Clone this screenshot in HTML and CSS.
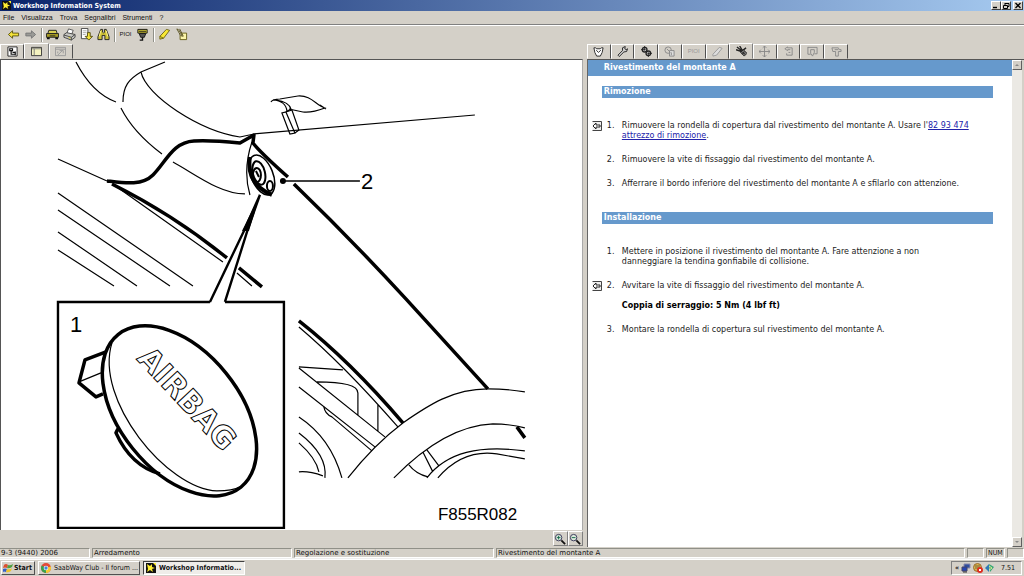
FILE: index.html
```html
<!DOCTYPE html>
<html lang="it">
<head>
<meta charset="utf-8">
<title>Workshop Information System</title>
<link rel="stylesheet" href="styles.css">
</head>
<body>
<header class="titlebar">
  <svg class="app-icon" viewBox="0 0 10 10"><rect width="10" height="10" fill="#111"/><path d="M1 1l3 2 2-2 0 3 3 1-3 1 1 3-3-2-3 2 1-3z" fill="#ffee32"/><path d="M7 0h3v3z" fill="#ffee32"/></svg>
  <h1>Workshop Information System</h1>
  <div class="window-buttons">
    <button aria-label="Riduci"><svg viewBox="0 0 8 7"><path d="M1 5.5h4" stroke="#000" stroke-width="1.4"/></svg></button>
    <button aria-label="Ripristina"><svg viewBox="0 0 8 7"><path d="M3 1.5h4v3h-1M3 1v2M1.500 3.500h4v3h-4z" fill="none" stroke="#000"/></svg></button>
    <button class="close" aria-label="Chiudi"><svg viewBox="0 0 8 7"><path d="M1.500 1l5 5M6.500 1l-5 5" stroke="#000" stroke-width="1.3"/></svg></button>
  </div>
</header>
<nav class="menubar">
  <button>File</button><button>Visualizza</button><button>Trova</button><button>Segnalibri</button><button>Strumenti</button><button>?</button>
</nav>
<div class="toolbar">
  <button aria-label="Indietro"><svg viewBox="0 0 14 14"><path d="M1.500 7L6 3v2.500h6.500v3H6V11z" fill="#f4e33a" stroke="#5b5410"/></svg></button>
  <button aria-label="Avanti"><svg viewBox="0 0 14 14"><path d="M12.500 7L8 3v2.500H2v3h6V11z" fill="#9a9a96" stroke="#777"/></svg></button>
  <span class="separator"></span>
  <button aria-label="Veicolo"><svg viewBox="0 0 14 14"><path d="M3 2.500h8l1 3.500H2z" fill="#d8cf52" stroke="#222"/><path d="M.5 6h13v4H.5z" fill="#a89d24" stroke="#222"/><path d="M1 10h3v2H1zM10 10h3v2h-3z" fill="#111"/><path d="M4 8.500h6" stroke="#222"/></svg></button>
  <button aria-label="Stampa"><svg viewBox="0 0 14 14"><path d="M4 6l2-5 5 1.500-1.500 4" fill="#fff" stroke="#555"/><path d="M1 7l3-2 9 2v3l-4 3-8-3z" fill="#c8c8c3" stroke="#444"/><path d="M1 7.500l8 2.500 4-3M9 10v3" fill="none" stroke="#444"/><path d="M6 10l2 1" stroke="#d8c800"/></svg></button>
  <button aria-label="Inserisci segnalibro"><svg viewBox="0 0 14 14"><path d="M1.500.5h7v11h-7z" fill="#fff" stroke="#444"/><path d="M3 3h4M3 5h4M3 7h3" stroke="#aaa"/><path d="M8 5h3v4h2.500L9.500 13 5.500 9H8z" fill="#f4e33a" stroke="#544d10"/></svg></button>
  <button aria-label="Cerca"><svg viewBox="0 0 14 14"><path d="M4 1.500h2v3l1 1 1-1v-3h2l3 8v3H8.500V8h-3v4.500H1v-3z" fill="#cfc33a" stroke="#222"/><path d="M4 3l-1.500 6M10 3l1.500 6" stroke="#fff79a"/></svg></button>
  <span class="separator"></span>
  <button class="text-button">PIOI</button>
  <button aria-label="Diagnosi"><svg viewBox="0 0 14 14"><path d="M2 1.500h10v4H2z" fill="#e2d539" stroke="#111"/><path d="M3 3.500h8" stroke="#111"/><path d="M3.500 6h7l-1.500 4H5z" fill="#555" stroke="#111"/><path d="M7 10v3H4" fill="none" stroke="#111" stroke-width="1.500"/></svg></button>
  <span class="separator"></span>
  <button aria-label="Evidenzia"><svg viewBox="0 0 14 14"><path d="M2 9l7-7.500 3.500 1L6 11l-4 1z" fill="#f8e832" stroke="#6a6116"/><path d="M2 9l4 2" stroke="#6a6116"/></svg></button>
  <button aria-label="Note"><svg viewBox="0 0 14 14"><path d="M5.500 5.500h7v7h-7z" fill="#fbf5a9" stroke="#665e16"/><path d="M2 1l2 1 4 7-2-1zM5 1l4 8" fill="#fff" stroke="#554e1b"/></svg></button>
</div>
<main class="workspace">
  <section class="column">
    <div class="tabs left-tabs">
      <button class="tab" aria-label="Struttura"><svg viewBox="0 0 12 12"><path d="M1 1h10v10H1z" fill="#fff" stroke="#222"/><path d="M3 3h3v2H3zM6 7h3M4.500 5v4H9M9 6v4" fill="none" stroke="#111" stroke-width="1.300"/></svg></button>
      <button class="tab active" aria-label="Figura"><svg viewBox="0 0 12 12"><path d="M.5 1.500h11v9H.5z" fill="#f5f3bf" stroke="#333"/><path d="M1 3h10M3.500 3v7" stroke="#777"/></svg></button>
      <button class="tab" disabled aria-label="Schema"><svg viewBox="0 0 12 12"><path d="M.5 1.500h11v9H.5zM1 3.500h10M3 10l5-5M5 5h4v3M3 6v2" fill="none" stroke="#999"/></svg></button>
    </div>
    <div class="picture-pane">
      <svg class="drawing" viewBox="1 60 581 470" preserveAspectRatio="xMinYMin meet" role="img" aria-label="Rivestimento del montante A">
        <g class="thin">
          <path d="M76 62Q92 93 116 102M165 62L141 72C129 79 123 86 123 102M141 72C146 96 200 131 240 137L254 134 475 115"/>
          <path d="M121 108C130 126 146 142 162 154M173 162C195 174 220 194 245 194"/>
          <path d="M58 159L107 181M58 193L193 286M58 210L170 286M58 232L137 286M58 250L114 286"/>
          <path d="M117 187L223 262M237 273L252 286M252 142C246 160 245 178 250 195"/>
          <path d="M271 102Q273 99 280 99L298 96C311 95 316 105 325 108Q312 113 303 112L289 109M273 100Q286 101 287 111M276 100Q289 102 291 109L286 112M320 105L326 109"/>
          <path d="M282 113L290 134 295 133 286 112zM286 112L292 110 299 130 295 133"/>
          <path d="M299 327Q344 365 398 427M299 367L343 370M299 368L385 437M299 387L375 447M317 382Q358 382 358 393V415M378 404V431"/>
          <path d="M324 407Q325 414 332 417L372 451M299 417Q331 438 342 478M299 433Q328 455 325 478M299 443Q316 458 319 472M299 472Q309 471 323 476"/>
          <path d="M348 478C366 455 383 438 403 423C429 405 453 389 488 389Q508 389 525 392M394 478Q445 426 493 424Q510 424 525 428"/>
          <path d="M427 478C447 452 480 445 525 451M438 478Q463 449 497 454L525 459M409 465Q416 474 428 477M423 452L433 472M427 450L439 466"/>
          <path d="M112 343C94 400 167 489 217 491Q233 491 240 487M79 382L101 373"/>
        </g>
        <g class="thick">
          <path d="M107 181C124 183 142 186 153 175C166 162 173 142 194 141Q210 140 240 143L254 135 253 143Q261 153 288 177M294 184Q351 239 406 299L488 389"/>
          <path d="M112 184Q174 215 227 258M239 268L262 287M299 321Q350 361 403 423M517 427L525 438"/>
          <ellipse cx="179.500" cy="411" rx="98" ry="60" transform="rotate(51.200 179.500 411)"/>
          <path d="M106 352L85 360 79 383 96 397 103 394M118 429L116 433Q131 466 160 474"/>
        </g>
        <path class="outline" d="M210 302H58V528H284V302H225M260 195L244 231 210 302M260 195L248 229 225 302"/>
        <path d="M260 195L249 231 242 231z"/>
        <g fill="none" stroke="#000">
          <ellipse cx="262" cy="175" rx="11" ry="21" stroke-width="1.500" transform="rotate(-22 262 175)"/>
          <path d="M250 157Q246 184 272 195" stroke-width="4"/>
          <ellipse cx="259" cy="173" rx="6" ry="12" stroke-width="2" transform="rotate(-14 259 173)"/>
          <ellipse cx="257" cy="175" rx="4" ry="7" stroke-width="2"/>
          <path d="M256 171L259 177" stroke-width="2"/>
          <ellipse cx="270" cy="186" rx="3" ry="5" stroke-width="2"/>
        </g>
        <circle cx="283" cy="181" r="3"/>
        <path class="lead" d="M283 181H360"/>
        <text class="callout" x="361" y="189">2</text>
        <text class="callout" x="70" y="332">1</text>
        <text class="figure-code" x="438" y="520">F855R082</text>
        <text class="embossed" x="0" y="0" transform="translate(136 359) rotate(47)">AIRBAG</text>
      </svg>
    </div>
    <div class="zoom-bar">
      <button aria-label="Ingrandisci"><svg viewBox="0 0 13 13"><circle cx="5" cy="5" r="3.500" fill="#dce9dc" stroke="#335"/><path d="M3 5h4M5 3v4" stroke="#164"/><path d="M8 8l4 4" stroke="#111" stroke-width="2"/></svg></button>
      <button aria-label="Riduci"><svg viewBox="0 0 13 13"><circle cx="5" cy="5" r="3.500" fill="#dce9dc" stroke="#335"/><path d="M3 5h4" stroke="#164"/><path d="M8 8l4 4" stroke="#111" stroke-width="2"/></svg></button>
    </div>
  </section>
  <section class="column">
    <div class="tabs right-tabs">
      <button class="tab" aria-label="Tempi"><svg viewBox="0 0 12 12"><path d="M1 2l2 0 1 1h4l1-1h2l-1 5-2 4H4L2 7z" fill="#fff" stroke="#222"/><path d="M3.500 4.500L6 7l2.500-2.500" fill="none" stroke="#222"/></svg></button>
      <button class="tab" aria-label="Attrezzi"><svg viewBox="0 0 12 12"><path d="M1 10l5-5V2l3-1.500-.5 2.500 1.500 1 1.500-1-1 3-3 .5-5 5z" fill="#ccc" stroke="#222"/></svg></button>
      <button class="tab" aria-label="Ricambi"><svg viewBox="0 0 12 12"><circle cx="4" cy="4" r="2.500" fill="#ddd" stroke="#222" stroke-width="1.500"/><circle cx="8" cy="8" r="2.500" fill="#ddd" stroke="#222" stroke-width="1.500"/><path d="M4 0v5M0 4h5M8 7v5M7 8h5" stroke="#222"/></svg></button>
      <button class="tab" disabled aria-label="Componenti"><svg viewBox="0 0 12 12"><circle cx="4.500" cy="4.500" r="3.500" fill="none" stroke="#888"/><path d="M3 3l4 4M6 5h5v6H6zM8 7v3" fill="#ddd" stroke="#888"/></svg></button>
      <button class="tab text-tab" disabled>PIOI</button>
      <button class="tab" disabled aria-label="Evidenzia"><svg viewBox="0 0 12 12"><path d="M1 9l7-7.500 3 1L5 10l-4 1z" fill="#ddd" stroke="#999"/></svg></button>
      <button class="tab active" aria-label="Rimozione e installazione"><svg viewBox="0 0 12 12"><path d="M1 1l5 4M4 0l3 5M0 4l6 2M7 5l4-3" fill="none" stroke="#222" stroke-width="1.500"/><path d="M5 7l3-3 4 4-3 3z" fill="#777" stroke="#222"/><path d="M7 7l3 2M9 6L7 9" stroke="#222"/></svg></button>
      <button class="tab" disabled aria-label="Posizione"><svg viewBox="0 0 12 12"><path d="M6 0v12M0 6h12M4 2l2-2 2 2M4 10l2 2 2-2M2 4L0 6l2 2M10 4l2 2-2 2" fill="none" stroke="#888"/></svg></button>
      <button class="tab" disabled aria-label="Procedura"><svg viewBox="0 0 12 12"><path d="M2 3l3-2v1h5v8H4V8M2 3l3 2V4h3M6 7h2" fill="none" stroke="#888"/></svg></button>
      <button class="tab" disabled aria-label="Bollettini"><svg viewBox="0 0 12 12"><path d="M1 1.500h10v7H8M1 1v8h3M4 4h4v3L6 11 4 8z" fill="none" stroke="#888"/></svg></button>
      <button class="tab" disabled aria-label="Collegamenti"><svg viewBox="0 0 12 12"><path d="M1 2h7l1 2h2v2H8v5H5V6H2zM4 4h4" fill="none" stroke="#888"/></svg></button>
    </div>
    <div class="text-pane">
      <article class="document">
        <h2 class="doc-title">Rivestimento del montante A</h2>
        <h3 class="section-title">Rimozione</h3>
        <ol class="steps">
          <li><button class="figure-link" aria-label="Mostra figura"><svg viewBox="0 0 10 10"><path d="M.5 .5h9v9h-9" fill="#eee" stroke="#444"/><path d="M1 5l3-3v2h4v2H4v2z" fill="#fff" stroke="#222"/></svg></button><span class="number">1.</span><p>Rimuovere la rondella di copertura dal rivestimento del montante A. Usare l'<a href="#attrezzo">82 93 474<br>attrezzo di rimozione</a>.</p></li>
          <li><span class="number">2.</span><p>Rimuovere la vite di fissaggio dal rivestimento del montante A.</p></li>
          <li><span class="number">3.</span><p>Afferrare il bordo inferiore del rivestimento del montante A e sfilarlo con attenzione.</p></li>
        </ol>
        <h3 class="section-title">Installazione</h3>
        <ol class="steps">
          <li><span class="number">1.</span><p>Mettere in posizione il rivestimento del montante A. Fare attenzione a non<br>danneggiare la tendina gonfiabile di collisione.</p></li>
          <li><button class="figure-link" aria-label="Mostra figura"><svg viewBox="0 0 10 10"><path d="M.5 .5h9v9h-9" fill="#eee" stroke="#444"/><path d="M1 5l3-3v2h4v2H4v2z" fill="#fff" stroke="#222"/></svg></button><span class="number">2.</span><p>Avvitare la vite di fissaggio del rivestimento del montante A.</p><p class="torque">Coppia di serraggio: 5 Nm (4 lbf ft)</p></li>
          <li><span class="number">3.</span><p>Montare la rondella di copertura sul rivestimento del montante A.</p></li>
        </ol>
      </article>
      <div class="scrollbar">
        <button aria-label="Scorri su"><svg viewBox="0 0 8 8"><path d="M2 5l2-2 2 2z" fill="#888"/></svg></button>
        <button aria-label="Scorri giù"><svg viewBox="0 0 8 8"><path d="M2 3l2 2 2-2z" fill="#888"/></svg></button>
      </div>
    </div>
  </section>
</main>
<footer class="statusbar">
  <span class="model">9-3 (9440) 2006</span><span class="group">Arredamento</span><span class="group">Regolazione e sostituzione</span><span class="subject">Rivestimento del montante A</span><span class="key"></span><span class="key num">NUM</span><span class="key"></span>
</footer>
<div class="taskbar">
  <button class="start"><svg viewBox="0 0 10 10"><path d="M1 2q2-2 4 0l-1 3q-2-1-4 0z" fill="#dc5030"/><path d="M5 2q2 1 5-1L9 4Q6 6 4 5z" fill="#50a040"/><path d="M0 6q2-1 4 0L3 9Q1 8 0 9z" fill="#3560c8"/><path d="M4 6q3 1 5-1L8 8Q5 10 3 9z" fill="#edc42c"/></svg>Start</button>
  <button class="task"><svg viewBox="0 0 10 10"><circle cx="5" cy="5" r="5" fill="#e34a38"/><path d="M5 5L.7 2.500A5 5 0 0 0 5 10z" fill="#38a34c"/><path d="M5 5l4.800-1.500A5 5 0 0 1 5 10z" fill="#f3ca30"/><circle cx="5" cy="5" r="2.300" fill="#fff"/><circle cx="5" cy="5" r="1.700" fill="#4285d8"/></svg><span>SaabWay Club - Il forum ...</span></button>
  <button class="task current"><svg viewBox="0 0 10 10"><rect width="10" height="10" fill="#111"/><path d="M1 1l3 2 2-2 0 3 3 1-3 1 1 3-3-2-3 2 1-3z" fill="#ffee32"/><path d="M7 0h3v3z" fill="#ffee32"/></svg><span>Workshop Informatio...</span></button>
  <div class="tray">
    <button class="more" aria-label="Mostra icone nascoste">«</button>
    <svg viewBox="0 0 10 10"><path d="M3 1h6v4H3z" fill="#304f9f" stroke="#88a"/><path d="M1 4h5v4H1z" fill="#2545b5" stroke="#446"/><path d="M2 9h4" stroke="#333"/></svg>
    <svg viewBox="0 0 10 10"><circle cx="4.500" cy="4.500" r="4" fill="#d9b449" stroke="#9a6a32"/><path d="M2 3h5M2 5h4" stroke="#764"/><circle cx="7" cy="7" r="3" fill="#df2d20"/><path d="M6 6l2 2M8 6L6 8" stroke="#fff"/></svg>
    <svg viewBox="0 0 10 10"><path d="M0 5l4-4v8z" fill="#2e7bb6"/><path d="M4 1l5 3-4 5z" fill="#38a576"/><path d="M4 3l3 2-3 2" fill="none" stroke="#d9ed92"/></svg>
    <time>7.51</time>
  </div>
</div>
</body>
</html>
```
FILE: styles.css
```css
* { box-sizing: border-box; }

body {
  margin: 0;
  height: 100vh;
  display: flex;
  flex-direction: column;
  overflow: hidden;
  background: #d4d0c8;
  color: #111;
  font: 7px/9px "DejaVu Sans Condensed", "DejaVu Sans", sans-serif;
}

button {
  margin: 0;
  padding: 0;
  border: 0;
  background: none;
  color: inherit;
  font: inherit;
}

h1, h2, h3, p, ol { margin: 0; padding: 0; }
svg { display: block; }

.titlebar {
  flex: none;
  height: 11px;
  display: flex;
  align-items: center;
  gap: 2px;
  padding: 0 1px 0 2px;
  background: linear-gradient(90deg, #0a246a, #a6caf0);
  color: #fff;
}
.titlebar h1 { flex: 1; font-size: 7px; font-weight: bold; line-height: 10px; }
.app-icon { width: 9px; height: 9px; }
.window-buttons { display: flex; }
.window-buttons button {
  width: 10px;
  height: 9px;
  background: #d4d0c8;
  border: 1px solid;
  border-color: #fff #404040 #404040 #fff;
}
.window-buttons svg { width: 8px; height: 7px; }
.window-buttons .close { margin-left: 2px; }

.menubar {
  flex: none;
  height: 14px;
  display: flex;
  align-items: center;
  gap: 7px;
  padding-left: 3px;
  border-bottom: 1px solid #808080;
  font-family: "Liberation Sans", sans-serif;
}

.toolbar {
  flex: none;
  height: 18px;
  display: flex;
  align-items: center;
  padding-left: 5px;
  border-top: 1px solid #fff;
}
.toolbar button { width: 17px; height: 16px; display: grid; place-items: center; }
.toolbar svg { width: 13px; height: 13px; }
.toolbar .separator {
  width: 2px;
  height: 14px;
  margin: 0 1px 0 2px;
  border-left: 1px solid #909088;
  border-right: 1px solid #fff;
}
.toolbar .text-button, .text-tab { font-family: "Liberation Sans", sans-serif; font-size: 6px; }

.workspace {
  flex: 1;
  min-height: 0;
  display: grid;
  grid-template-columns: 4fr 3fr;
  gap: 4px;
}
.column { display: flex; flex-direction: column; min-width: 0; min-height: 0; }

.tabs { flex: none; display: flex; align-items: flex-end; height: 16px; }
.left-tabs { width: 73px; }
.right-tabs { width: 261px; }
.tab {
  flex: 1;
  height: 15px;
  display: grid;
  place-items: center;
  border: 1px solid;
  border-color: #fff #505050 transparent #fff;
}
.tab.active { height: 16px; border-right-color: #808080; }
.tab svg { width: 11px; height: 11px; }
.tab:disabled { color: #999; }

.picture-pane {
  flex: 1;
  min-height: 0;
  background: #fff;
  border: 1px solid #555;
  border-right-color: #aaa;
  border-bottom: 0;
}
.drawing { width: 100%; height: 100%; }
.thin { fill: none; stroke: #000; stroke-width: 1.2; }
.thick { fill: none; stroke: #000; stroke-width: 3.5; stroke-linejoin: round; }
.outline { fill: none; stroke: #000; stroke-width: 2.4; }
.lead { stroke: #000; stroke-width: 1.6; }
.callout { font: 22px "Liberation Sans", sans-serif; }
.figure-code { font: 17px "Liberation Sans", sans-serif; }
.embossed {
  font: bold 30px "DejaVu Sans", sans-serif;
  fill: #fff;
  stroke: #000;
  stroke-width: 1;
}

.zoom-bar { flex: none; height: 17px; display: flex; justify-content: flex-end; padding-top: 1px; }
.zoom-bar button {
  width: 15px;
  height: 15px;
  display: grid;
  place-items: center;
  border: 1px solid;
  border-color: #fff #808080 #808080 #fff;
}
.zoom-bar svg { width: 12px; height: 12px; }

.text-pane {
  flex: 1;
  min-height: 0;
  display: flex;
  background: #fff;
  border-top: 1px solid #555;
  border-left: 1px solid #666;
}
.document {
  flex: 1;
  min-width: 0;
  color: #222;
  font: 8px/10px "DejaVu Sans", sans-serif;
}
.doc-title {
  padding: 3px 16px;
  background: #69c;
  color: #fff;
  font-size: 8px;
  line-height: 10px;
}
.section-title {
  margin: 10px 19px 23px 14px;
  padding: 0 2px;
  background: #69c;
  color: #fff;
  font-size: 8px;
  line-height: 12px;
}
.steps {
  display: flex;
  flex-direction: column;
  gap: 14px;
  margin: 0 20px 23px 4px;
  list-style: none;
}
.steps li {
  display: grid;
  grid-template-columns: 15px 15px 1fr;
  row-gap: 10px;
}
.number { grid-column: 2; }
.steps p { grid-column: 3; }
.steps a { color: #22a; }
.torque { color: #000; font-weight: bold; }
.figure-link { grid-column: 1; width: 10px; height: 10px; }
.figure-link svg { width: 10px; height: 10px; }

.scrollbar {
  flex: none;
  width: 12px;
  display: flex;
  flex-direction: column;
  justify-content: space-between;
  background: #ebe9e4;
  border-right: 2px solid #d4d0c8;
}
.scrollbar button {
  height: 10px;
  background: #d4d0c8;
  border: 1px solid;
  border-color: #fff #606060 #606060 #fff;
}
.scrollbar svg { width: 8px; height: 8px; }

.statusbar {
  flex: none;
  height: 12px;
  display: flex;
  gap: 2px;
  padding-top: 1px;
  border-bottom: 1px solid #eee;
  font-family: "DejaVu Sans", sans-serif;
}
.statusbar span {
  padding-left: 1px;
  border: 1px solid;
  border-color: #909088 #fff #fff #909088;
  white-space: nowrap;
}
.statusbar .model { flex: 0 0 90px; border-left: 0; }
.statusbar .group { flex: 0 0 200px; }
.statusbar .subject { flex: 1; }
.statusbar .key { flex: 0 0 17px; }
.statusbar .num { flex-basis: 19px; font-family: "DejaVu Sans Condensed", sans-serif; }

.taskbar {
  flex: none;
  height: 17px;
  display: flex;
  align-items: center;
  gap: 3px;
  padding: 0 2px 0 1px;
  border-top: 1px solid #fff;
}
.taskbar svg { flex: none; width: 10px; height: 10px; }
.start, .task {
  height: 14px;
  display: flex;
  align-items: center;
  gap: 1px;
  padding: 0 1px;
  border: 1px solid;
  border-color: #fff #505050 #505050 #fff;
  white-space: nowrap;
}
.start { width: 34px; font-weight: bold; }
.task { width: 102px; gap: 3px; padding: 0 2px; }
.task.current {
  background: #efede9;
  border-color: #404040 #fff #fff #404040;
  font-weight: bold;
}
.tray {
  height: 14px;
  display: flex;
  align-items: center;
  gap: 2px;
  margin-left: auto;
  padding: 0 6px 0 3px;
  border: 1px solid;
  border-color: #808080 #fff #fff #808080;
}
.tray time { margin-left: 4px; }
.tray .more { font-weight: bold; }
```
